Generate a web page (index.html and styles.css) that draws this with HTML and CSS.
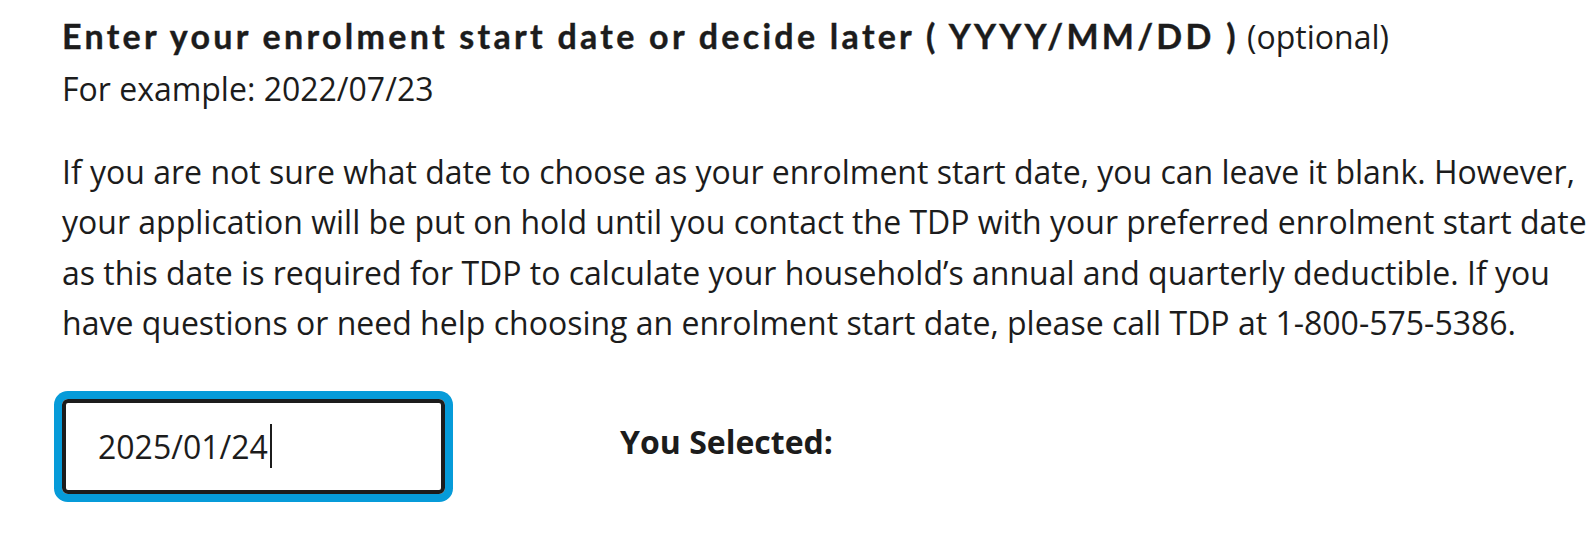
FILE: index.html
```html
<!DOCTYPE html>
<html lang="en">
<head>
<meta charset="utf-8">
<title>Enrolment start date</title>
<link rel="stylesheet" href="styles.css">
</head>
<body>
<div class="field">
  <label class="label" for="startdate"><span class="label-main">Enter your enrolment start date or decide later ( YYYY/MM/DD )</span> <span class="optional">(optional)</span></label>
  <div class="hint">For example: 2022/07/23</div>
  <p class="help">If you are not sure what date to choose as your enrolment start date, you can leave it blank. However, your application will be put on hold until you contact the TDP with your preferred enrolment start date as this date is required for TDP to calculate your household’s annual and quarterly deductible. If you have questions or need help choosing an enrolment start date, please call TDP at 1-800-575-5386.</p>
  <div class="row">
    <div class="input" id="startdate"><span class="value">2025/01/24</span><span class="caret"></span></div>
    <div class="selected">You Selected:</div>
  </div>
</div>
</body>
</html>
```
FILE: styles.css
```css
html, body {
  margin: 0;
  padding: 0;
  background: #ffffff;
}
body {
  font-family: "Open Sans", "Noto Sans", sans-serif;
  color: #1c1c1c;
  min-height: 556px;
}
.field {
  padding: 12px 0 40px 62px;
  width: 1525px;
}
.label {
  display: block;
  line-height: 48px;
  font-size: 32px;
}
.label-main {
  font-family: Lato, "Open Sans", sans-serif;
  font-weight: 700;
  font-size: 34px;
  letter-spacing: 3.28px;
  -webkit-text-stroke: 0.4px #1c1c1c;
}
.optional {
  font-size: 32px;
}
.hint {
  font-size: 32px;
  line-height: 48px;
  margin-top: 4px;
}
.help {
  font-size: 32px;
  line-height: 50.4px;
  margin: 34px 0 0 0;
}
.row {
  display: flex;
  align-items: center;
  margin-top: 50px;
}
.input {
  box-sizing: border-box;
  width: 383px;
  height: 95px;
  border: 4px solid #1c1c1c;
  border-radius: 6px;
  box-shadow: 0 0 0 8px #069bd9;
  display: flex;
  align-items: center;
  padding-left: 32px;
  font-size: 32px;
}
.caret {
  width: 2px;
  height: 44px;
  background: #1c1c1c;
  margin-left: 2px;
}
.selected {
  margin-left: 175px;
  margin-bottom: 9px;
  font-weight: 700;
  font-size: 32px;
}
```
